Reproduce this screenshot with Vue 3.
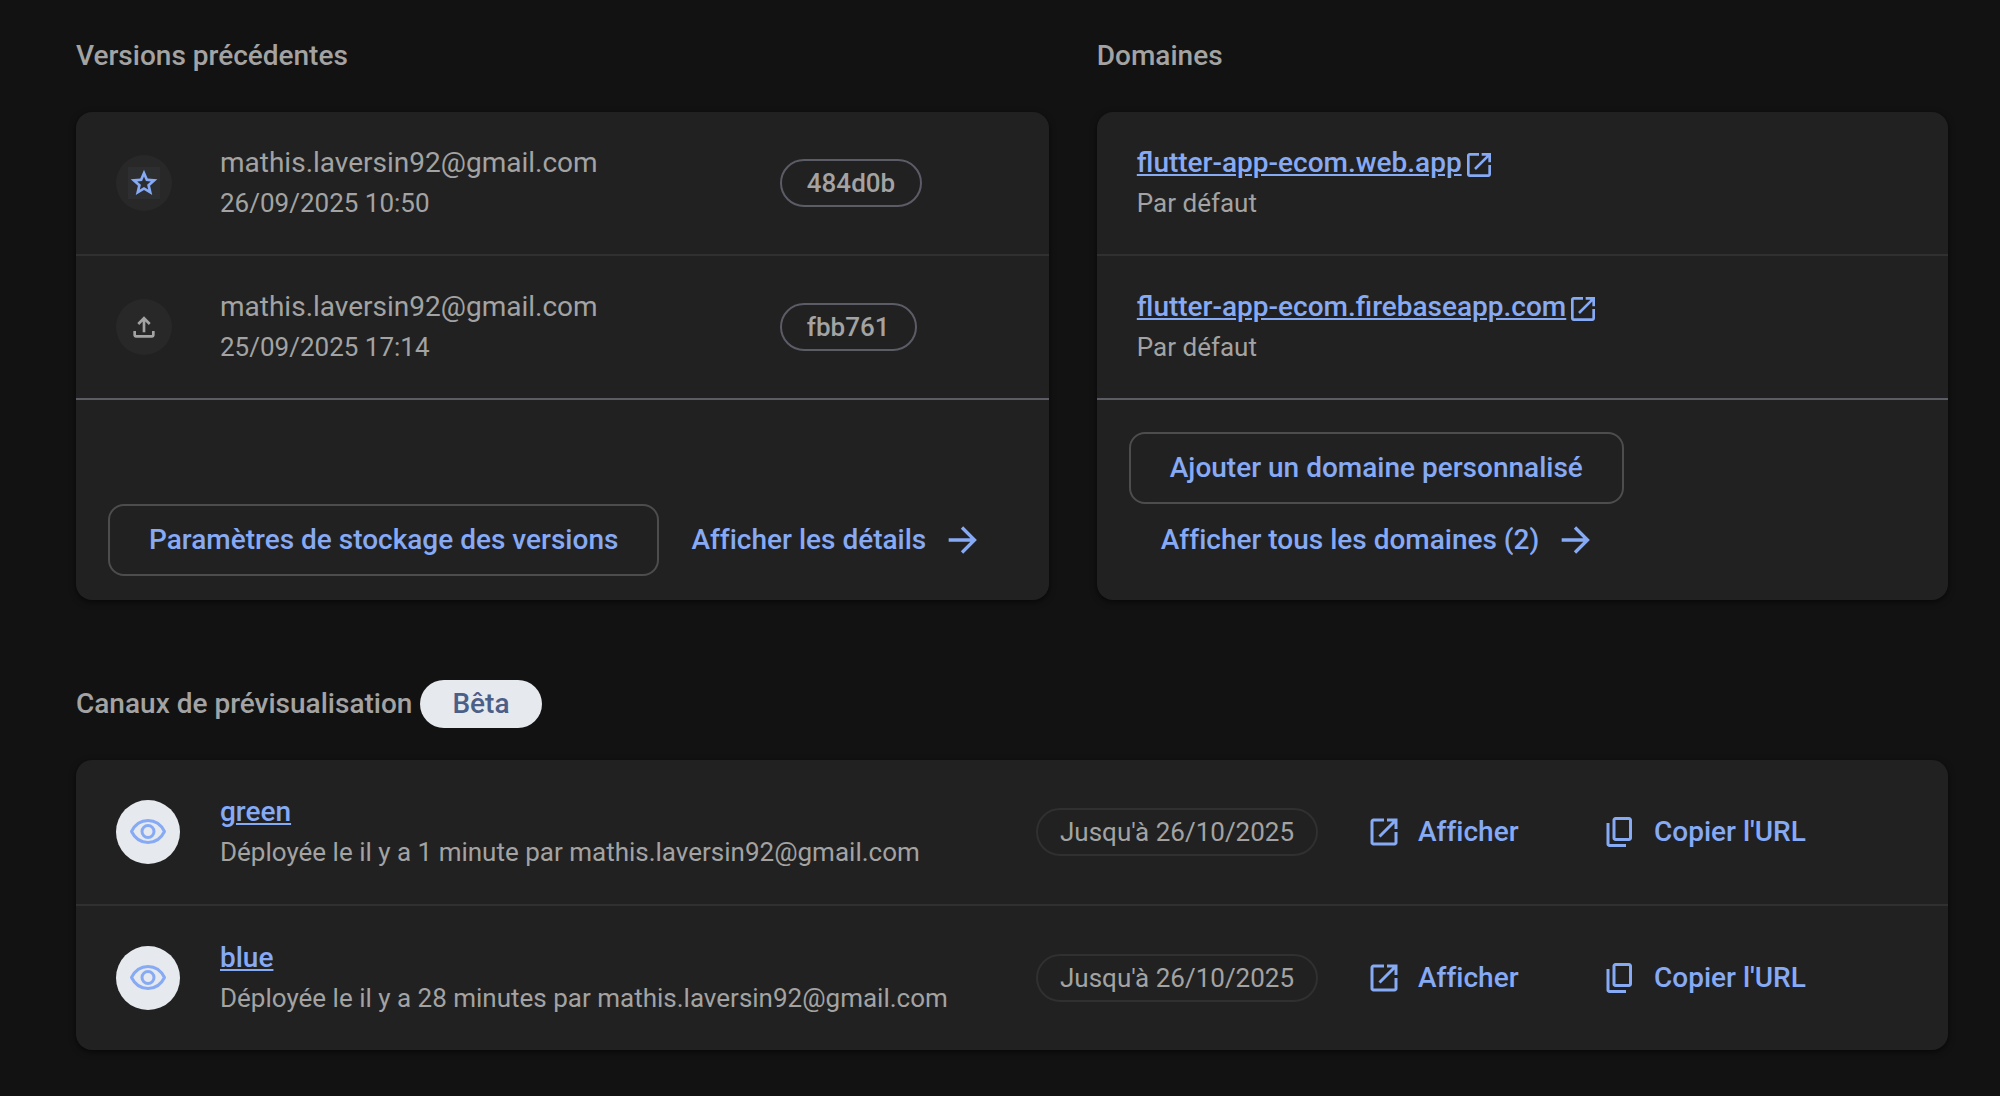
<script setup>
const icons = {
  star: 'm8.85 16.825 3.15-1.9 3.15 1.925-.825-3.6 2.775-2.4-3.65-.325-1.45-3.4-1.45 3.375-3.65.325 2.775 2.425-.825 3.575ZM5.825 21l1.625-7.025L2 9.25l7.2-.625L12 2l2.8 6.625 7.2.625-5.45 4.725L18.175 21 12 17.275 5.825 21Z',
  upload: 'M11 16V7.85l-2.6 2.6L7 9l5-5 5 5-1.4 1.45-2.6-2.6V16h-2Zm-5 4q-.825 0-1.413-.587T4 18v-3h2v3h12v-3h2v3q0 .825-.587 1.413T18 20H6Z',
  copy: 'M9 18q-.825 0-1.413-.587T7 16V4q0-.825.587-1.413T9 2h9q.825 0 1.413.587T20 4v12q0 .825-.587 1.413T18 18H9Zm0-2h9V4H9v12Zm-4 4h11v2H5q-.825 0-1.413-.587T3 20V6h2v14Z',
  open: 'M5 21q-.825 0-1.413-.587T3 19V5q0-.825.587-1.413T5 3h7v2H5v14h14v-7h2v7q0 .825-.587 1.413T19 21H5Zm4.7-5.3-1.4-1.4L17.6 5H14V3h7v7h-2V6.4l-9.3 9.3Z',
}

const versions = [
  { id: '484d0b', author: 'mathis.laversin92@gmail.com', date: '26/09/2025 10:50', icon: 'star' },
  { id: 'fbb761', author: 'mathis.laversin92@gmail.com', date: '25/09/2025 17:14', icon: 'upload' },
]
const domains = ['flutter-app-ecom.web.app', 'flutter-app-ecom.firebaseapp.com']
const channels = [
  { name: 'green', info: 'Déployée le il y a 1 minute par mathis.laversin92@gmail.com' },
  { name: 'blue', info: 'Déployée le il y a 28 minutes par mathis.laversin92@gmail.com' },
]
</script>

<template>
  <main class="page">
    <div class="overview">
      <section class="block">
        <h2 class="title">Versions précédentes</h2>
        <div class="card">
          <ul class="list">
            <li v-for="v in versions" :key="v.id" class="row version">
              <span class="status" :class="v.icon">
                <svg class="glyph" viewBox="0 0 24 24" aria-hidden="true"><path :d="icons[v.icon]" /></svg>
              </span>
              <div>
                <p class="primary">{{ v.author }}</p>
                <p class="secondary">{{ v.date }}</p>
              </div>
              <div><span class="chip hash">{{ v.id }}</span></div>
            </li>
          </ul>
          <footer class="footer">
            <button type="button" class="button outlined">Paramètres de stockage des versions</button>
            <a href="#" class="button more">
              Afficher les détails
              <svg class="arrow" viewBox="0 0 24 24" aria-hidden="true"><path d="M4 12h15M12 4.5l7.5 7.5-7.5 7.5" /></svg>
            </a>
          </footer>
        </div>
      </section>

      <section class="block">
        <h2 class="title">Domaines</h2>
        <div class="card">
          <ul class="list">
            <li v-for="d in domains" :key="d" class="row">
              <div>
                <p class="primary">
                  <a :href="'https://' + d" class="link"><span class="name">{{ d }}</span><svg class="glyph external" viewBox="0 0 24 24" aria-hidden="true"><path :d="icons.open" /></svg></a>
                </p>
                <p class="secondary">Par défaut</p>
              </div>
            </li>
          </ul>
          <footer class="footer stacked">
            <button type="button" class="button outlined">Ajouter un domaine personnalisé</button>
            <a href="#" class="button more">
              Afficher tous les domaines (2)
              <svg class="arrow" viewBox="0 0 24 24" aria-hidden="true"><path d="M4 12h15M12 4.5l7.5 7.5-7.5 7.5" /></svg>
            </a>
          </footer>
        </div>
      </section>
    </div>

    <section class="block">
      <h2 class="title">Canaux de prévisualisation <span class="badge">Bêta</span></h2>
      <div class="card">
        <ul class="list">
          <li v-for="c in channels" :key="c.name" class="row channel">
            <span class="avatar">
              <svg class="eye" viewBox="0 0 40 40" aria-hidden="true">
                <path d="M3.500 19.500C7 12.500 13 8.500 20 8.500s13 4 16.500 11c-3.500 7-9.500 11-16.500 11s-13-4-16.500-11Z" />
                <circle cx="20" cy="19.500" r="6" />
              </svg>
            </span>
            <div>
              <p class="primary"><a href="#" class="link name">{{ c.name }}</a></p>
              <p class="secondary">{{ c.info }}</p>
            </div>
            <div><span class="chip">Jusqu'à 26/10/2025</span></div>
            <a href="#" class="button action">
              <svg class="glyph" viewBox="0 0 24 24" aria-hidden="true"><path :d="icons.open" /></svg>
              Afficher
            </a>
            <button type="button" class="button action">
              <svg class="glyph" viewBox="0 0 24 24" aria-hidden="true"><path :d="icons.copy" /></svg>
              Copier l'URL
            </button>
          </li>
        </ul>
      </div>
    </section>
  </main>
</template>

<style>
body {
  margin: 0;
  background: #121212;
}
</style>

<style scoped>
.page {
  display: flex;
  flex-direction: column;
  gap: 80px;
  padding: 32px 52px 46px 76px;
  color: #a3a3a3;
  font-family: Roboto, "Liberation Sans", sans-serif;
  font-size: 28px;
  line-height: 40px;
}

.overview {
  display: grid;
  grid-template-columns: 8fr 7fr;
  gap: 48px;
}

.block {
  display: flex;
  flex-direction: column;
  gap: 32px;
}

.title {
  display: flex;
  align-items: center;
  gap: 8px;
  margin: 0;
  font-size: 28px;
  font-weight: 500;
  line-height: 48px;
}

.badge {
  padding: 0 32px;
  border-radius: 24px;
  background: #e6e9ee;
  color: #4b6088;
}

.card {
  display: flex;
  flex: 1;
  flex-direction: column;
  border-radius: 16px;
  background: #212121;
  box-shadow: 0 2px 6px rgba(0, 0, 0, 0.6);
}

.list {
  margin: 0;
  padding: 0;
  list-style: none;
}

.row {
  display: grid;
  align-items: center;
  padding: 31px 40px;
  border-bottom: 2px solid #303030;
}

.row:last-child {
  border-bottom-color: #5b5c66;
}

.version {
  grid-template-columns: 104px minmax(0, 1fr) 229px;
}

.channel {
  grid-template-columns: 104px minmax(0, 1fr) 314px 236px 322px;
  padding: 32px 40px;
}

.channel:last-child {
  border-bottom: 0;
}

.primary,
.secondary {
  margin: 0;
}

.secondary {
  font-size: 26px;
}

.status,
.avatar {
  display: flex;
  align-items: center;
  justify-content: center;
  width: 56px;
  height: 56px;
  border-radius: 50%;
  background: #282828;
}

.avatar {
  width: 64px;
  height: 64px;
  background: #e6e9ee;
}

.glyph {
  width: 32px;
  height: 32px;
  fill: currentColor;
}

.star .glyph {
  background: #2c2e30;
  color: #87aaf5;
}

.external {
  margin-left: 1px;
  vertical-align: middle;
}

.eye {
  width: 40px;
  height: 40px;
  fill: none;
  stroke: #87aaf5;
  stroke-width: 3;
  stroke-linejoin: round;
}

.chip {
  display: inline-block;
  padding: 0 22px;
  border: 2px solid #303030;
  border-radius: 24px;
  font-size: 26px;
  line-height: 44px;
  vertical-align: middle;
}

.hash {
  padding: 0 25px;
  border-color: #5b5c66;
  font-weight: 500;
}

.link {
  color: #87aaf5;
  font-weight: 500;
  text-decoration: none;
}

.name {
  text-decoration: underline;
}

.footer {
  display: flex;
  flex: 1;
  align-items: flex-end;
  padding: 32px 32px 24px;
}

.stacked {
  flex-direction: column;
  align-items: flex-start;
}

.button {
  display: flex;
  align-items: center;
  box-sizing: border-box;
  height: 72px;
  padding: 0 30px;
  border: 2px solid transparent;
  border-radius: 16px;
  background: none;
  color: #87aaf5;
  font: inherit;
  font-weight: 500;
  font-variant-ligatures: none;
  text-decoration: none;
  white-space: nowrap;
  cursor: pointer;
}

.outlined {
  padding: 0 39px;
  border-color: #4d4d4d;
}

.more,
.action {
  gap: 16px;
}

.action {
  justify-self: start;
  padding: 0 14px;
}

.action .glyph {
  width: 36px;
  height: 36px;
}

.arrow {
  width: 40px;
  height: 40px;
  fill: none;
  stroke: currentColor;
  stroke-width: 2;
}
</style>
